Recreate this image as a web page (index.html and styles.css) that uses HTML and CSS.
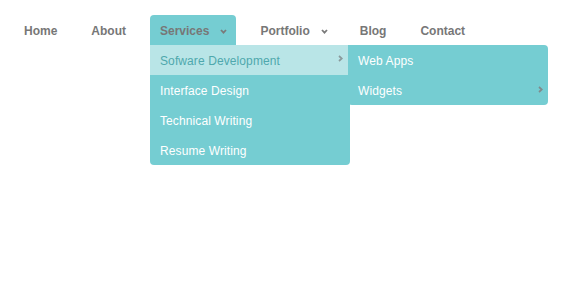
FILE: index.html
```html
<!DOCTYPE html>
<html lang="en">
<head>
<meta charset="utf-8">
<title>Menu</title>
<link rel="stylesheet" href="styles.css">
</head>
<body>
<nav class="menu">
  <ul class="nav">
    <li class="nav-item"><a href="#">Home</a></li>
    <li class="nav-item"><a href="#">About</a></li>
    <li class="nav-item has-sub active">
      <a href="#">Services<svg class="chev" width="7" height="5" viewBox="0 0 7 5"><polyline points="1,1 3.5,3.6 6,1" fill="none" stroke="#7a7a7a" stroke-width="1.8"/></svg></a>
      <ul class="dropdown">
        <li class="drop-item hover">
          <a href="#">Sofware Development</a>
          <svg class="arrow" width="5" height="7" viewBox="0 0 5 7"><polyline points="1,1 3.8,3.5 1,6" fill="none" stroke="#8a9a9c" stroke-width="1.7"/></svg>
          <ul class="submenu">
            <li class="drop-item"><a href="#">Web Apps</a></li>
            <li class="drop-item">
              <a href="#">Widgets</a>
              <svg class="arrow" width="5" height="7" viewBox="0 0 5 7"><polyline points="1,1 3.8,3.5 1,6" fill="none" stroke="#808a8c" stroke-width="1.7"/></svg>
            </li>
          </ul>
        </li>
        <li class="drop-item"><a href="#">Interface Design</a></li>
        <li class="drop-item"><a href="#">Technical Writing</a></li>
        <li class="drop-item"><a href="#">Resume Writing</a></li>
      </ul>
    </li>
    <li class="nav-item has-sub"><a href="#">Portfolio<svg class="chev" width="7" height="5" viewBox="0 0 7 5"><polyline points="1,1 3.5,3.6 6,1" fill="none" stroke="#7a7a7a" stroke-width="1.8"/></svg></a></li>
    <li class="nav-item"><a href="#">Blog</a></li>
    <li class="nav-item"><a href="#">Contact</a></li>
  </ul>
</nav>
</body>
</html>
```

FILE: styles.css
```css
html, body {
  margin: 0;
  padding: 0;
  background: #ffffff;
}

body {
  font-family: "Liberation Sans", Arial, sans-serif;
  width: 580px;
  height: 300px;
}

ul {
  list-style: none;
  margin: 0;
  padding: 0;
}

a {
  text-decoration: none;
}

.menu {
  padding: 15px 0 0 14px;
}

.nav {
  display: flex;
  gap: 14px;
}

.nav-item {
  position: relative;
  height: 30px;
}

.nav-item > a {
  display: flex;
  align-items: center;
  height: 28px;
  padding: 2px 10px 0;
  font-size: 12px;
  font-weight: bold;
  color: #777777;
  line-height: 28px;
}

.has-sub > a {
  padding-right: 8px;
}

.has-sub.active > a {
  padding-right: 9px;
}

.chev {
  margin-left: 11px;
  margin-top: 0;
}

.nav-item.active > a {
  background: #75cdd2;
  border-radius: 4px 4px 0 0;
}

.dropdown {
  position: absolute;
  top: 30px;
  left: 0;
  width: 200px;
  background: #75cdd2;
  border-radius: 0 0 4px 4px;
  z-index: 2;
}

.drop-item {
  position: relative;
  height: 30px;
}

.drop-item > a {
  display: block;
  height: 28px;
  line-height: 28px;
  padding: 2px 10px 0;
  font-size: 12px;
  letter-spacing: 0.1px;
  color: #ffffff;
}

.drop-item.hover > a {
  background: #b9e5e7;
  color: #4fa8ad;
}

.arrow {
  position: absolute;
  top: 10px;
  right: 7px;
}

.submenu {
  position: absolute;
  top: 0;
  left: 198px;
  width: 200px;
  background: #75cdd2;
  border-radius: 0 4px 4px 4px;
  z-index: 3;
}

.submenu .arrow {
  top: 11px;
  right: 5px;
}
```
